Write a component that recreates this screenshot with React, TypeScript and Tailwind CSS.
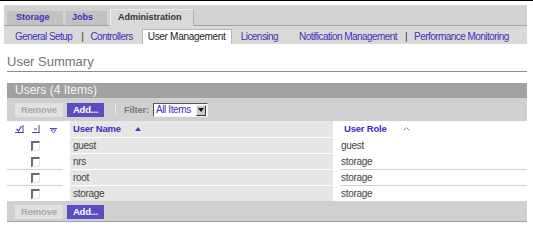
import React from "react";

const font = { fontFamily: '"Liberation Sans", Arial, Helvetica, sans-serif' };

const users = [
  { name: "guest", role: "guest", line: false },
  { name: "nrs", role: "storage", line: false },
  { name: "root", role: "storage", line: true },
  { name: "storage", role: "storage", line: true },
];

function Buttons() {
  return (
    <div className="flex items-center">
      <div className="w-[48px] h-[14px] bg-[#e1e1e1] text-[#a9a9a9] text-[9.5px] font-bold flex items-center justify-center tracking-[-0.2px]">
        Remove
      </div>
      <div className="ml-[4px] w-[37px] h-[14px] bg-[#5a4cc1] text-white text-[9.5px] font-bold flex items-center justify-center tracking-[-0.2px]">
        Add...
      </div>
    </div>
  );
}

function Checkbox() {
  return (
    <div className="w-[9px] h-[10px] bg-white border-t-2 border-l-2 border-t-[#6a6a6a] border-l-[#6a6a6a] border-r border-b border-r-[#e8e8e8] border-b-[#e8e8e8]" />
  );
}

export default function App() {
  return (
    <div className="w-[533px] h-[232px] bg-white border-t border-black pt-[4px] overflow-hidden" style={font}>
      {/* tab row */}
      <div className="ml-[4px] w-[523px] h-[21px] bg-[#d2d2d2] border-b border-[#a3a3a3] flex items-end pl-[3px] gap-[3px]">
        <div className="w-[56px] h-[14px] bg-[#c2c2c2] text-[9px] font-bold text-[#3d31b8] flex items-center pl-[9px]">
          Storage
        </div>
        <div className="w-[41px] h-[14px] bg-[#c2c2c2] text-[9px] font-bold text-[#3d31b8] flex items-center pl-[6px]">
          Jobs
        </div>
        <div className="w-[84px] h-[17px] -mb-px bg-[#d9d9d9] border-t border-l border-[#ececec] border-r border-r-[#b0b0b0] text-[9px] font-bold text-[#333] flex items-center pl-[7px]">
          Administration
        </div>
      </div>

      {/* sub tabs */}
      <div className="ml-[4px] w-[523px] h-[18px] bg-[#d9d9d9] flex items-end pl-[11px] text-[10px] tracking-[-0.55px] text-[#3d31b8]">
        <span className="h-[15px] leading-[15px]">General Setup</span>
        <span className="h-[15px] leading-[15px] ml-[9px] text-[#333]">|</span>
        <span className="h-[15px] leading-[15px] ml-[7px]">Controllers</span>
        <span className="h-[15px] leading-[14px] ml-[9px] w-[90px] bg-white border border-b-0 border-[#b5b5b5] pl-[5px] text-[#222] tracking-[-0.3px]">
          User Management
        </span>
        <span className="h-[15px] leading-[15px] ml-[9px]">Licensing</span>
        <span className="h-[15px] leading-[15px] ml-[21px]">Notification Management</span>
        <span className="h-[15px] leading-[15px] ml-[8px] text-[#333]">|</span>
        <span className="h-[15px] leading-[15px] ml-[7px]">Performance Monitoring</span>
      </div>

      {/* title */}
      <div className="mx-[7px] w-[520px] h-[28px] border-b border-[#8c8c8c] flex items-end pb-[3px]">
        <span className="text-[13px] leading-none text-[#737373]">User Summary</span>
      </div>

      {/* table */}
      <div className="ml-[7px] w-[520px] mt-[11px]">
        <div className="h-[15px] bg-[#a1a1a1] text-[12px] leading-[15px] text-[#f4f4f4] pl-[8px]">
          Users (4 Items)
        </div>

        <div className="h-[23px] bg-[#d0d0d0] flex items-start pt-[5px] pl-[8px]">
          <Buttons />
          <div className="ml-[11px] mt-[2px] w-px h-[10px] bg-[#eeeeee]" />
          <span className="ml-[8px] text-[9.5px] font-bold text-[#7a7a7a] leading-[14px] tracking-[-0.2px]">Filter:</span>
          <div className="ml-[4px] w-[55px] h-[14px] bg-white border-t border-l border-[#555] border-r border-b border-r-[#f0f0f0] border-b-[#f0f0f0] flex items-center justify-between">
            <span className="pl-[2px] text-[10px] text-[#3d31b8] tracking-[-0.4px] leading-none">All Items</span>
            <div className="w-[10px] h-[11px] mr-px bg-[#c8c8c8] border-t border-l border-[#f4f4f4] border-r border-b border-r-[#333] border-b-[#333] flex items-center justify-center">
              <svg width="6" height="4" viewBox="0 0 6 4">
                <path d="M0 0 H6 L3 4 Z" fill="#111" />
              </svg>
            </div>
          </div>
        </div>

        <div className="grid grid-cols-[63px_263px_194px]">
          {/* header row */}
          <div className="h-[16px] bg-white flex items-center pl-[8px] text-[#4a3fc0]">
            <svg width="9" height="8" viewBox="0 0 9 8" className="mt-[-1px]">
              <path d="M0 7.5 H8.5 M8 0 V8" stroke="currentColor" strokeWidth="1" fill="none" />
              <path d="M1.5 4 L3.5 6 L6.5 1" stroke="currentColor" strokeWidth="1.2" fill="none" />
            </svg>
            <svg width="8" height="8" viewBox="0 0 8 8" className="ml-[8px] mt-[-1px]">
              <path d="M0 7.5 H7.5 M7 0 V8 M2 4 H5" stroke="currentColor" strokeWidth="1" fill="none" />
            </svg>
            <svg width="7" height="6" viewBox="0 0 7 6" className="ml-[10px] mt-[3px]">
              <path d="M0 0.5 H7" stroke="currentColor" strokeWidth="1" />
              <path d="M1 2 L6 2 L3.5 5 Z" stroke="currentColor" strokeWidth="0.8" fill="none" />
            </svg>
          </div>
          <div className="h-[16px] bg-[#e6e6e6] flex items-center pl-[3px]">
            <span className="text-[9.5px] font-bold text-[#3d31b8] tracking-[-0.2px]">User Name</span>
            <svg width="6" height="4" viewBox="0 0 6 4" className="ml-[14px]">
              <path d="M0 4 H6 L3 0 Z" fill="#4a3fc0" />
            </svg>
          </div>
          <div className="h-[16px] bg-white flex items-center pl-[11px]">
            <span className="text-[9.5px] font-bold text-[#3d31b8] tracking-[-0.2px]">User Role</span>
            <svg width="7" height="4" viewBox="0 0 7 4" className="ml-[16px]">
              <path d="M0.5 3.5 L3.5 0.5 L6.5 3.5" stroke="#8a82d8" strokeWidth="1" fill="none" />
            </svg>
          </div>

          {users.map((u) => (
            <React.Fragment key={u.name}>
              <div className="h-[16px] bg-white flex flex-col">
                <div className={`w-[56px] h-px ${u.line ? "bg-[#cfcfcf]" : "bg-white"}`} />
                <div className="flex-1 flex items-center pl-[24px]">
                  <Checkbox />
                </div>
              </div>
              <div className="h-[16px] bg-[#e6e6e6] border-t border-white flex items-center pl-[3px] text-[10px] text-[#444] tracking-[-0.3px]">
                {u.name}
              </div>
              <div className="h-[16px] bg-white flex flex-col pl-[7px]">
                <div className={`h-px ${u.line ? "bg-[#cfcfcf]" : "bg-white"}`} />
                <div className="flex-1 flex items-center pl-px text-[10px] text-[#444] tracking-[-0.3px]">
                  {u.role}
                </div>
              </div>
            </React.Fragment>
          ))}
        </div>

        <div className="h-[21px] bg-[#d0d0d0] border-b border-[#a3a3a3] pt-[4px] pl-[8px]">
          <Buttons />
        </div>
      </div>
    </div>
  );
}
